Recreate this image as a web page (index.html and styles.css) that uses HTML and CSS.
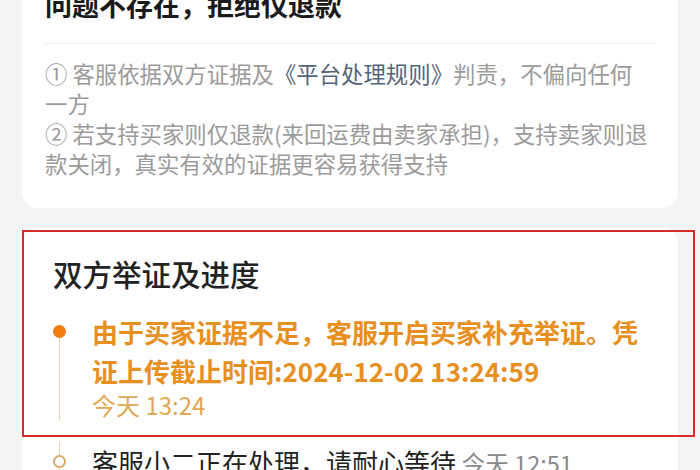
FILE: index.html
```html
<!DOCTYPE html>
<html lang="zh-CN">
<head>
<meta charset="utf-8">
<title>退款详情</title>
<link rel="stylesheet" href="styles.css">
</head>
<body>
<div class="page">
  <section class="card verdict">
    <h1 class="verdict-title">问题不存在，拒绝仅退款</h1>
    <div class="divider"></div>
    <div class="notes">
      <p>① 客服依据双方证据及<span class="rule">《平台处理规则》</span>判责，不偏向任何一方</p>
      <p>② 若支持买家则仅退款(来回运费由卖家承担)，支持卖家则退款关闭，真实有效的证据更容易获得支持</p>
    </div>
  </section>

  <section class="card progress">
    <h2 class="progress-title">双方举证及进度</h2>
    <ul class="timeline">
      <li class="step active">
        <div class="marker">
          <span class="seg seg-top hidden"></span>
          <span class="dot"></span>
          <span class="seg seg-rest"></span>
        </div>
        <div class="step-body">
          <div class="step-text">由于买家证据不足，客服开启买家补充举证。凭证上传截止时间:2024-12-02 13:24:59</div>
          <div class="step-time">今天 13:24</div>
        </div>
      </li>
      <li class="step">
        <div class="marker">
          <span class="seg seg-top"></span>
          <span class="ring"></span>
          <span class="seg seg-rest"></span>
        </div>
        <div class="step-body">
          <div class="step-text">客服小二正在处理，请耐心等待 <span class="inline-time">今天 12:51</span></div>
        </div>
      </li>
    </ul>
  </section>
</div>
<div class="highlight-box"></div>
</body>
</html>
```
FILE: styles.css
```css
html, body {
  margin: 0;
  padding: 0;
}
body {
  background: #f4f4f5;
  font-family: "Noto Sans CJK SC", "Noto Sans", sans-serif;
  width: 700px;
  height: 470px;
  overflow: hidden;
  position: relative;
}
.page {
  padding: 0 22px;
  display: flex;
  flex-direction: column;
  gap: 20px;
}
.card {
  background: #ffffff;
  border-radius: 16px;
}
.verdict {
  margin-top: -27px;
  padding: 14px 24px 30px 23px;
}
.verdict-title {
  margin: 0;
  font-size: 27px;
  line-height: 36px;
  font-weight: 700;
  color: #1a1a1a;
}
.divider {
  margin-top: 20px;
  margin-right: -1px;
  height: 1px;
  background: #efefef;
}
.notes {
  margin-top: 14px;
}
.notes p {
  margin: 0;
  font-size: 22.4px;
  line-height: 30px;
  color: #9b9b9b;
}
.rule {
  color: #566479;
}
.progress {
  padding: 24px 25px 0 31px;
  border-radius: 16px 16px 0 0;
  min-height: 260px;
}
.progress-title {
  margin: 0;
  font-size: 29.5px;
  line-height: 42px;
  font-weight: 500;
  color: #222222;
}
.timeline {
  list-style: none;
  margin: 18px 0 0;
  padding: 0;
}
.step {
  display: flex;
  gap: 26px;
  padding-bottom: 22px;
}
.marker {
  width: 13px;
  flex: none;
  display: flex;
  flex-direction: column;
  align-items: center;
}
.seg {
  width: 1px;
  background: #e9d3b3;
}
.seg.hidden {
  background: transparent;
}
.seg-top {
  height: 13px;
}
.seg-rest {
  flex: 1;
}
.dot {
  width: 13px;
  height: 13px;
  border-radius: 50%;
  background: #f27d12;
  flex: none;
}
.ring {
  width: 9px;
  height: 9px;
  border-radius: 50%;
  border: 2px solid #d9ab66;
  flex: none;
}
.step-body {
  flex: 1;
  min-width: 0;
}
.step-text {
  font-size: 26px;
  line-height: 39px;
  color: #222222;
}
.active .step-text {
  color: #e8901f;
  font-weight: 700;
}
.step-time {
  font-size: 24px;
  line-height: 30px;
  color: #e2a752;
}
.inline-time {
  font-size: 23.5px;
  color: #8a8a8a;
}
.highlight-box {
  position: absolute;
  left: 22px;
  top: 230px;
  width: 669px;
  height: 203px;
  border: 2px solid #d52d2d;
  pointer-events: none;
}
```
